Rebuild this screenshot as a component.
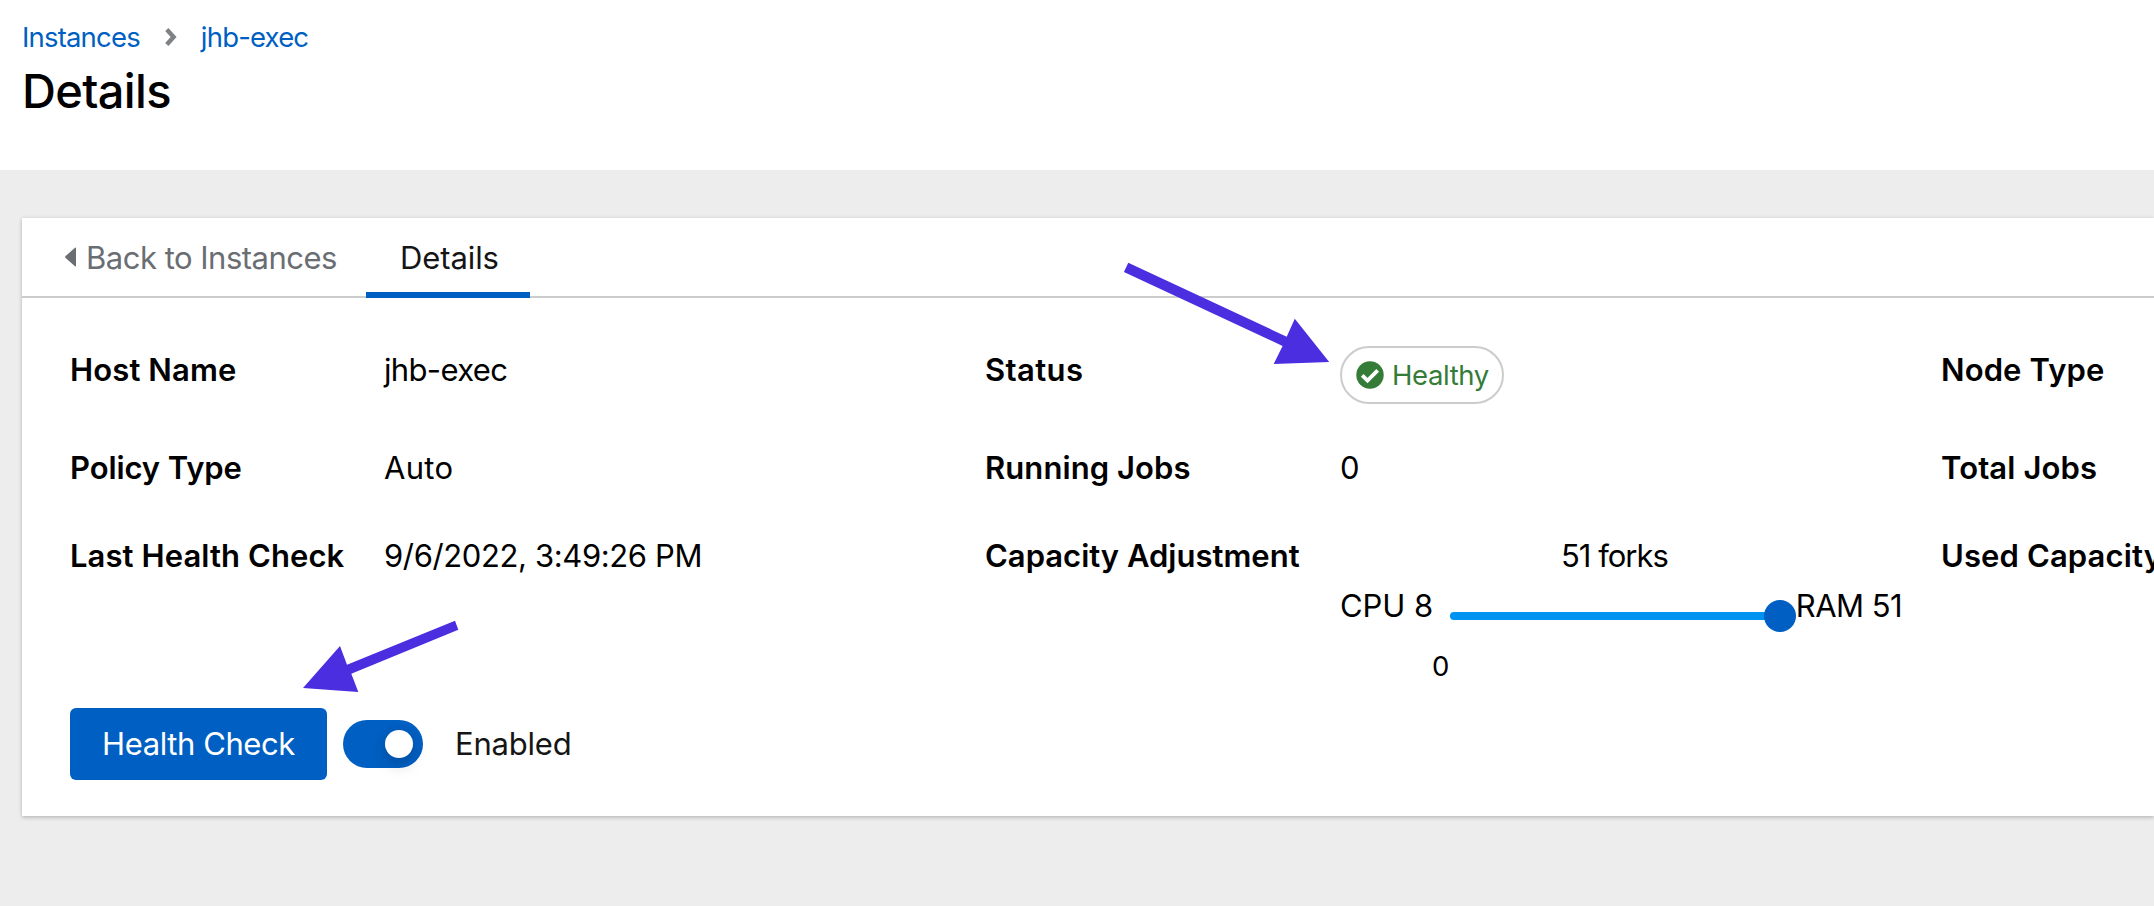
<div class="page">
  <header>
    <nav class="crumbs">
      <a href="#instances">Instances</a>
      <svg class="chev" width="14" height="20" viewBox="0 0 14 20"><path d="M2.8 2.6 9.6 10l-6.8 7.4" fill="none" stroke="#7f8284" stroke-width="4.4" /></svg>
      <a href="#host">jhb-exec</a>
    </nav>
    <h1>Details</h1>
  </header>

  <main>
    <div class="tabs">
      <a class="back" href="#back">
        <svg width="11" height="20" viewBox="0 0 11 20"><path d="M10 .8Q11 .2 11 1.5v17q0 1.300-1 .7L.6 10.900q-.9-.9 0-1.800z" fill="#6a6e73" /></svg>
        <span>Back to Instances</span>
      </a>
      <a class="tab" href="#details">Details</a>
    </div>

    <dl>
      <dt>Host Name</dt><dd class="s-jhb">jhb-exec</dd>
      <dt class="s-status">Status</dt>
      <dd>
        <span class="badge">
          <svg width="28" height="28" viewBox="0 0 28 28"><circle cx="14" cy="14" r="13.700" fill="#357c38" /><path d="m6.200 14.300 5.300 5.200 10.200-10.200" fill="none" stroke="#fff" stroke-width="3.800" /></svg>
          <span>Healthy</span>
        </span>
      </dd>
      <dt>Node Type</dt>

      <dt class="s-policy">Policy Type</dt><dd class="s-auto">Auto</dd>
      <dt class="s-run">Running Jobs</dt><dd>0</dd>
      <dt>Total Jobs</dt>

      <dt class="s-run">Last Health Check</dt><dd>9/6/2022, 3:49:26 PM</dd>
      <dt class="s-cap">Capacity Adjustment</dt>
      <dd class="capacity">
        <div class="forks">51 forks</div>
        <div class="slider">
          <span class="cpu">CPU 8</span>
          <div class="rail-box">
            <div class="rail"><i></i></div>
            <small>0</small>
          </div>
          <span class="ram">RAM 51</span>
        </div>
      </dd>
      <dt>Used Capacity</dt>
    </dl>

    <div class="actions">
      <button>Health Check</button>
      <span class="switch"><i></i></span>
      <span class="enabled">Enabled</span>
    </div>

    <svg class="arrows" width="2132" height="598" viewBox="22 218 2132 598" fill="#4a2ee0">
      <path d="M1128.300 262.700 1286.700 336.700 1294.800 318.700 1329.200 362 1273.700 364 1282.600 346 1123.900 272z" />
      <path d="M455 620.700 347 664.700 340 646 303 688 358.300 692 351.300 673.700 458.300 629.700z" />
    </svg>
  </main>
</div>

<style>
  :global(body) { background: #ededed; overflow: hidden; }
  .page { width: 2154px; height: 906px; overflow: hidden; background: #ededed; font: 400 31px/48px Inter, sans-serif; color: #000; letter-spacing: -.38px; }
  a { text-decoration: none; }
  header { box-sizing: border-box; height: 170px; padding: 16px 0 0 22px; background: #fff; }
  .crumbs { display: flex; align-items: center; height: 42px; font-size: 27.5px; line-height: 42px; }
  .crumbs a { color: #005fc2; letter-spacing: -.82px; }
  .chev { margin: 0 23px 0 24px; }
  h1 { margin: 2px 0 0; font-size: 47px; line-height: 62px; font-weight: 500; letter-spacing: -.65px; }
  main { position: relative; box-sizing: border-box; height: 598px; margin: 48px 0 0 22px; background: #fff; box-shadow: 0 2px 4px rgba(3,3,3,.16), 0 0 4px rgba(3,3,3,.1); }
  .tabs { display: flex; box-sizing: border-box; height: 80px; padding: 0 0 0 43px; border-bottom: 2px solid #ccc; }
  .back { display: flex; width: 301px; padding-top: 16px; box-sizing: border-box; color: #6a6e73; letter-spacing: -.5px; }
  .back svg { margin: 13px 10px 0 0; }
  .tab { box-sizing: border-box; width: 164px; height: 80px; padding: 16px 0 0 34px; color: #151515; border-bottom: 6px solid #005fc2; letter-spacing: -.1px; }
  dl { display: grid; grid-template-columns: 314px 601px 355px 601px 213px; grid-template-rows: 98px 88px 176px; margin: 0; padding: 48px 0 0 48px; }
  dt { font-weight: 600; letter-spacing: .12px; white-space: nowrap; }
  dd { margin: 0; }
  .s-jhb { letter-spacing: -.65px; }
  .s-policy { letter-spacing: -.1px; }
  .s-auto { letter-spacing: .31px; }
  .s-status { letter-spacing: .4px; }
  .s-run { letter-spacing: .08px; }
  .s-cap { letter-spacing: 0; }
  .badge { display: flex; align-items: center; box-sizing: border-box; width: 164px; height: 58px; padding-left: 14px; border: 2px solid #ccc; border-radius: 29px; color: #357c38; font-size: 27.5px; }
  .badge span { margin-left: 8px; }
  .capacity { width: 562px; }
  .forks { height: 50px; padding-left: 221px; letter-spacing: -1px; }
  .slider { display: flex; height: 100px; }
  .cpu { width: 110px; letter-spacing: -.06px; }
  .rail-box { width: 346px; padding-top: 30px; box-sizing: border-box; }
  .rail { position: relative; width: 330px; height: 8px; border-radius: 4px; background: #0092f0; }
  .rail i { position: absolute; right: -16px; top: -12px; width: 32px; height: 32px; border-radius: 50%; background: #005fc2; }
  small { display: block; margin: 25px 0 0 -18px; font-size: 27.5px; line-height: 42px; }
  .ram { white-space: nowrap; letter-spacing: -.55px; }
  .actions { display: flex; align-items: center; height: 72px; padding-left: 48px; }
  button { width: 257px; height: 72px; padding: 0; border: 0; border-radius: 6px; background: #005fc2; color: #fff; font: inherit; letter-spacing: -.4px; }
  .switch { display: flex; align-items: center; justify-content: flex-end; box-sizing: border-box; width: 80px; height: 48px; margin: 0 32px 0 16px; padding-right: 10px; border-radius: 24px; background: #005fc2; }
  .switch i { width: 28px; height: 28px; border-radius: 50%; background: #fff; box-shadow: 0 8px 16px rgba(3,3,3,.14), 0 0 8px rgba(3,3,3,.08); }
  .enabled { color: #151515; letter-spacing: -.2px; }
  .arrows { position: absolute; left: 0; top: 0; pointer-events: none; }
</style>
